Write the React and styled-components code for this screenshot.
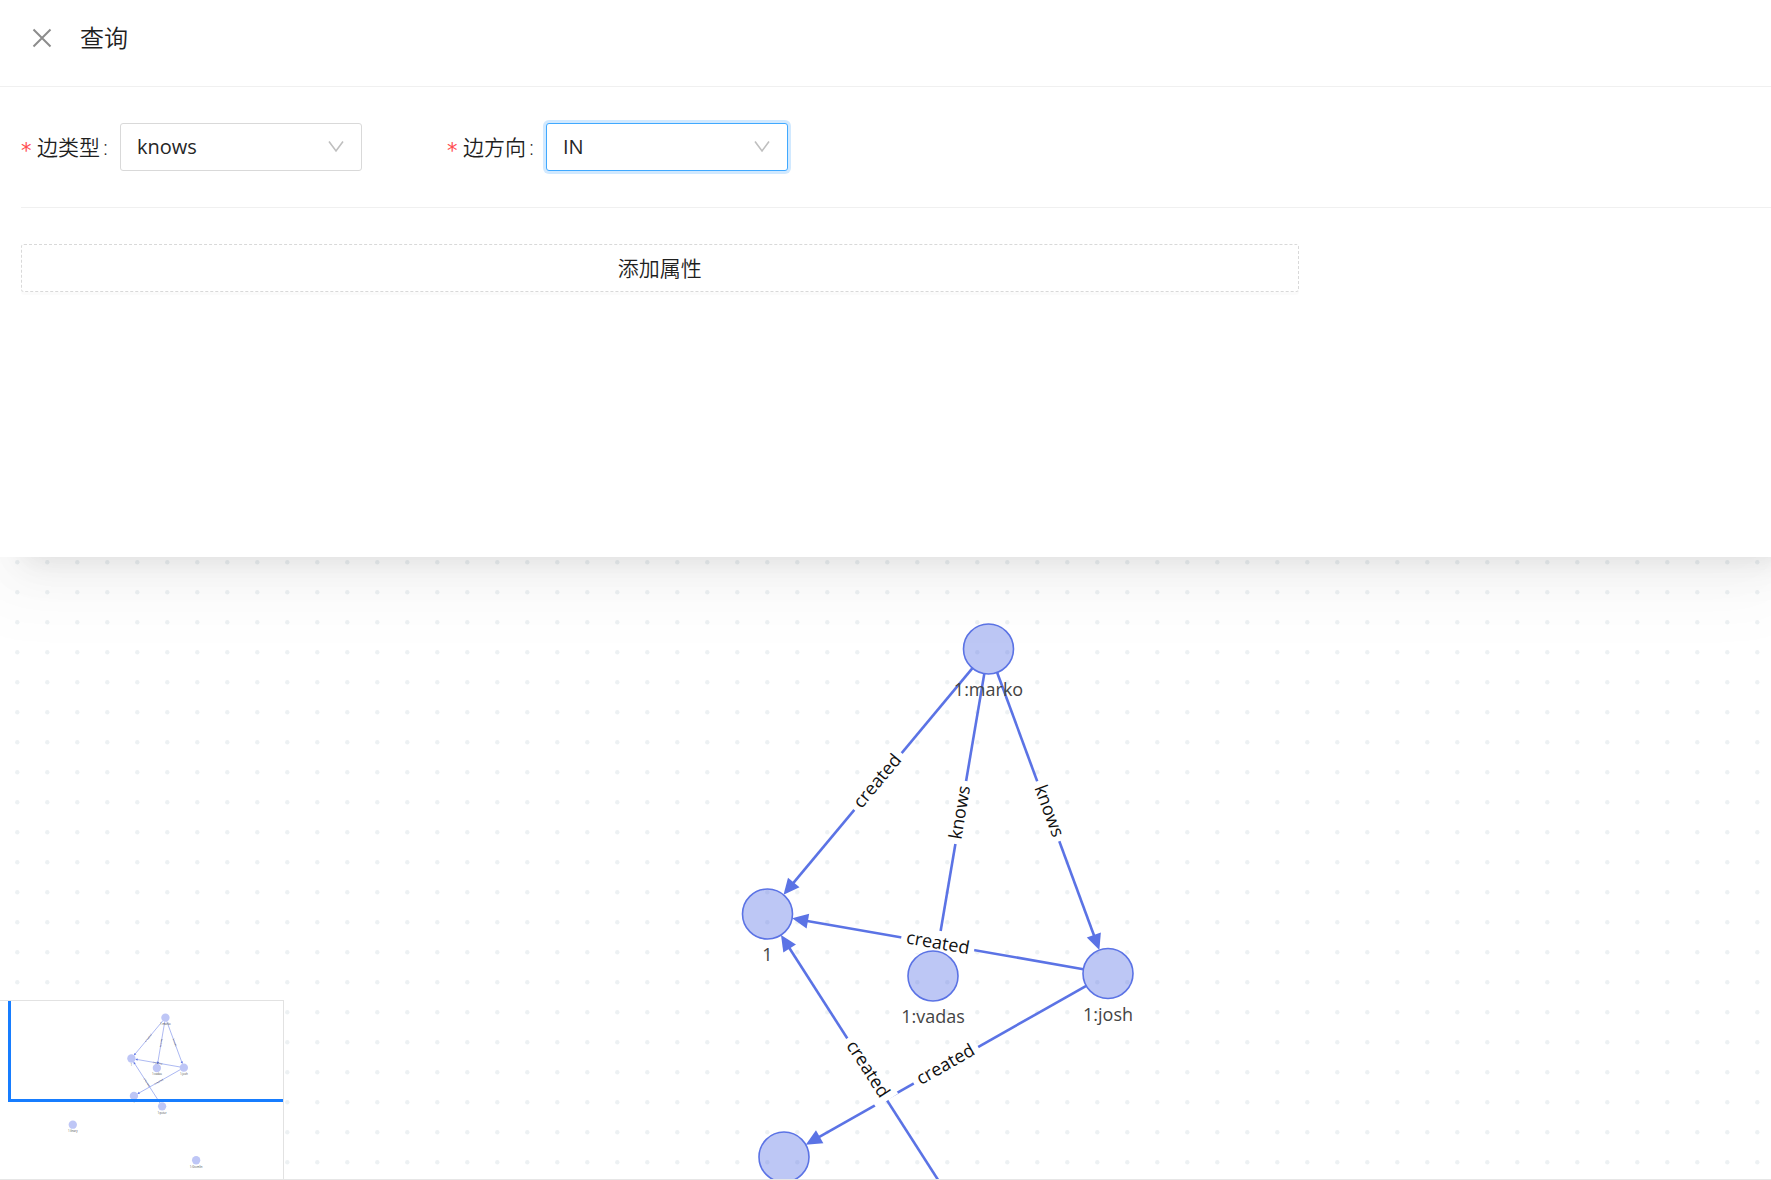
import React from "react";
import styled, { createGlobalStyle } from "styled-components";

const GlobalStyle = createGlobalStyle`
  *, *::before, *::after { box-sizing: border-box; }
  body {
    margin: 0;
    background: #fff;
    color: #1f1f1f;
    font-family: "Open Sans", "Noto Sans CJK SC", sans-serif;
  }
`;

const Page = styled.div`
  display: flex;
  flex-direction: column;
  min-height: 100vh;
  overflow: hidden;
`;

const Drawer = styled.section`
  position: relative;
  z-index: 1;
  min-height: 557px;
  background: #fff;
  box-shadow: 18px 9px 24px -8px rgba(0, 0, 0, 0.07), 18px 14px 42px rgba(0, 0, 0, 0.05),
    0 18px 72px 24px rgba(0, 0, 0, 0.03);
`;

const Header = styled.header`
  display: flex;
  align-items: center;
  gap: 28px;
  height: 87px;
  padding: 0 32px 10px;
  border-bottom: 1px solid #f0f0f0;
`;

const CloseButton = styled.button`
  display: flex;
  padding: 0;
  border: 0;
  background: none;
  color: #8c8c8c;
  cursor: pointer;
`;

const Title = styled.h1`
  margin: 0;
  font-size: 24px;
  font-weight: 350;
  line-height: 32px;
`;

const Form = styled.form`
  padding: 36px 0 36px 21px;
`;

const FieldRow = styled.div`
  display: flex;
  gap: 85px;
  padding-bottom: 36px;
  border-bottom: 1px solid #f0f0f0;
`;

const Field = styled.div`
  display: flex;
  align-items: center;
  height: 48px;
`;

const Label = styled.label`
  display: flex;
  align-items: center;
  width: 99px;
  font-size: 21px;
  font-weight: 350;
  line-height: 32px;
  white-space: nowrap;

  &::before {
    content: "*";
    width: 16px;
    padding-top: 8px;
    color: #ff4d4f;
    font-family: "DejaVu Sans", sans-serif;
    font-size: 21px;
    font-weight: 400;
  }

  &::after {
    content: ":";
    padding-left: 3px;
  }
`;

const SelectBox = styled.div`
  display: grid;
  grid-template-columns: 1fr;
  align-items: center;
  width: 242px;
  color: #bfbfbf;

  & > * { grid-area: 1 / 1; }
  & > svg { justify-self: end; margin-right: 18px; pointer-events: none; }
`;

const Select = styled.select`
  appearance: none;
  width: 100%;
  height: 48px;
  padding: 0 48px 0 16px;
  border: 1px solid ${(p) => (p.$active ? "#40a9ff" : "#d9d9d9")};
  border-radius: 3px;
  box-shadow: ${(p) => (p.$active ? "0 0 0 3px rgba(24, 144, 255, 0.2)" : "none")};
  background: #fff;
  color: #262626;
  font-family: inherit;
  font-size: 20px;
  line-height: 32px;
  outline: none;
`;

const AddButton = styled.button`
  width: 73%;
  height: 48px;
  margin-top: 36px;
  border: 1px dashed #d9d9d9;
  border-radius: 3px;
  box-shadow: 0 3px 0 rgba(0, 0, 0, 0.016);
  background: #fff;
  color: #1f1f1f;
  font-family: inherit;
  font-size: 21px;
  font-weight: 350;
  line-height: 32px;
  cursor: pointer;
`;

const Canvas = styled.main`
  position: relative;
  display: flex;
  flex: 1;
  min-height: 622px;
  border-bottom: 1px solid #e6e6e6;
  overflow: hidden;
`;

const Stage = styled.svg`
  flex: 1;
  width: 100%;
  font-family: "Open Sans", sans-serif;
  font-size: 18px;
`;

const MiniMap = styled.aside`
  position: absolute;
  left: 0;
  bottom: 0;
  width: 284px;
  height: 179px;
  border: 1px solid #e2e2e2;
  border-width: 1px 1px 0 0;
  background: #fff;

  & > svg {
    display: block;
    width: 100%;
    height: 100%;
    font-family: "Open Sans", sans-serif;
    font-size: 18px;
  }
`;

const R = 25;

// Height of the part of the graph that the stage shows; the rest is only on the mini map.
const STAGE_BOTTOM = 622;

const nodes = {
  marko: { x: 988.5, y: 92, label: "1:marko" },
  lop: { x: 767.5, y: 357, label: "1" },
  vadas: { x: 933, y: 419, label: "1:vadas" },
  josh: { x: 1108, y: 416.5, label: "1:josh" },
  ripple: { x: 784, y: 600, label: "1" },
  peter: { x: 967, y: 668, label: "1:peter" },
  left: { x: 387, y: 787, label: "1:linary" },
  right: { x: 1188, y: 1018, label: "1:Gremlin" },
};

const edges = [
  { from: "marko", to: "lop", label: "created", width: 74 },
  { from: "marko", to: "vadas", label: "knows", width: 64 },
  { from: "marko", to: "josh", label: "knows", width: 64 },
  { from: "josh", to: "lop", label: "created", width: 74 },
  { from: "josh", to: "ripple", label: "created", width: 74 },
  { from: "peter", to: "lop", label: "created", width: 74 },
];

function Edge({ from, to, label, width, mini }) {
  const a = nodes[from];
  const b = nodes[to];
  const dx = b.x - a.x;
  const dy = b.y - a.y;
  const length = Math.hypot(dx, dy);
  const angle = (Math.atan2(dy, dx) * 180) / Math.PI;
  const flipped = Math.abs(angle) > 90;
  return (
    <g transform={`translate(${a.x} ${a.y}) rotate(${angle})`}>
      <line
        x1={R}
        x2={length - R - 8}
        stroke="#5b73e5"
        strokeWidth={mini ? 5 : 2.6}
        strokeOpacity={mini ? 0.6 : 1}
      />
      <path d={`M${length - R} 0l-16 -7.5v15z`} fill="#5b73e5" />
      <g transform={`translate(${length / 2} 0) rotate(${flipped ? 180 : 0})`}>
        {!mini && <rect x={-width / 2} y="-13" width={width} height="26" fill="#fff" />}
        <text y="5" textAnchor="middle" fill="#111" fillOpacity={mini ? 0.7 : 1}>{label}</text>
      </g>
    </g>
  );
}

function Node({ x, y, label, mini }) {
  return (
    <g transform={`translate(${x} ${y})`}>
      <circle
        r={mini ? R + 2 : R}
        fill={mini ? "#bec6f6" : "#5b73e5"}
        fillOpacity={mini ? 1 : 0.4}
        stroke={mini ? "none" : "#5b73e5"}
        strokeWidth="1.6"
      />
      {(mini || y + R * 2 < STAGE_BOTTOM) && (
        <text y="47" textAnchor="middle" fill="#444">{label}</text>
      )}
    </g>
  );
}

function Graph({ mini }) {
  const shown = Object.entries(nodes).filter(([, n]) => mini || n.y - R < STAGE_BOTTOM);
  return (
    <>
      {edges.map((e) => <Edge key={e.from + e.to} {...e} mini={mini} />)}
      {shown.map(([id, n]) => <Node key={id} {...n} mini={mini} />)}
    </>
  );
}

function Chevron() {
  return (
    <svg width="16" height="12" viewBox="0 0 16 12" fill="none" stroke="currentColor" strokeWidth="1.6" aria-hidden="true">
      <path d="M1 0.5L8 10L15 0.5" />
    </svg>
  );
}

function SelectField({ id, label, options, active }) {
  return (
    <Field>
      <Label htmlFor={id}>{label}</Label>
      <SelectBox>
        <Select id={id} defaultValue={options[0]} $active={active}>
          {options.map((o) => <option key={o}>{o}</option>)}
        </Select>
        <Chevron />
      </SelectBox>
    </Field>
  );
}

export default function App() {
  return (
    <Page>
      <GlobalStyle />
      <Drawer>
        <Header>
          <CloseButton type="button" aria-label="关闭">
            <svg width="20" height="20" viewBox="0 0 20 20" fill="none" stroke="currentColor" strokeWidth="2">
              <path d="M1.5 1.5l17 17M18.5 1.5l-17 17" />
            </svg>
          </CloseButton>
          <Title>查询</Title>
        </Header>
        <Form>
          <FieldRow>
            <SelectField id="edge-type" label="边类型" options={["knows"]} />
            <SelectField id="edge-direction" label="边方向" options={["IN"]} active />
          </FieldRow>
          <AddButton type="button">添加属性</AddButton>
        </Form>
      </Drawer>
      <Canvas>
        <Stage>
          <defs>
            <pattern id="dots" x="2" y="-10" width="30" height="30" patternUnits="userSpaceOnUse">
              <circle cx="15.3" cy="15.3" r="2.2" fill="#edf1f3" />
            </pattern>
          </defs>
          <rect width="100%" height="100%" fill="url(#dots)" />
          <Graph />
        </Stage>
        <MiniMap>
          <svg>
            <g transform="translate(13.2 2.5) scale(0.154)">
              <Graph mini />
            </g>
            <path d="M9.5 0V99.5H283" fill="none" stroke="#177dff" strokeWidth="3" />
          </svg>
        </MiniMap>
      </Canvas>
    </Page>
  );
}
